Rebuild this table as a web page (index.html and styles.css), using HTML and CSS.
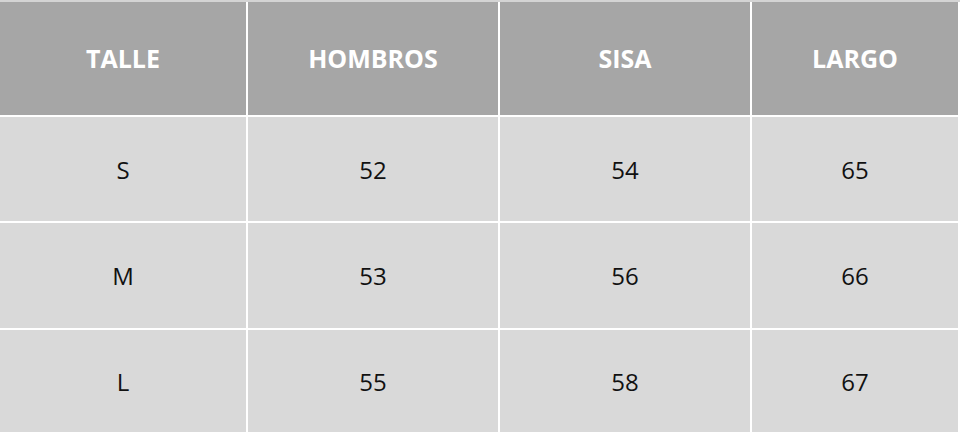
FILE: index.html
```html
<!DOCTYPE html>
<html>
<head>
<meta charset="utf-8">
<link rel="stylesheet" href="styles.css">
</head>
<body>
<div class="table">
  <div class="cell head">TALLE</div>
  <div class="cell head">HOMBROS</div>
  <div class="cell head">SISA</div>
  <div class="cell head">LARGO</div>
  <div class="cell">S</div>
  <div class="cell">52</div>
  <div class="cell">54</div>
  <div class="cell">65</div>
  <div class="cell">M</div>
  <div class="cell">53</div>
  <div class="cell">56</div>
  <div class="cell">66</div>
  <div class="cell">L</div>
  <div class="cell">55</div>
  <div class="cell">58</div>
  <div class="cell">67</div>
</div>
</body>
</html>
```
FILE: styles.css
```css
html, body {
  margin: 0;
  padding: 0;
  background: #ffffff;
}
.table {
  width: 960px;
  height: 432px;
  box-sizing: border-box;
  border-top: 2px solid #d4d4d4;
  padding-right: 2px;
  display: grid;
  grid-template-columns: 246px 250px 250px 206px;
  grid-template-rows: 113px 104px 105px 1fr;
  gap: 2px;
  background: #ffffff;
  font-family: "Open Sans", "Liberation Sans", sans-serif;
}
.cell {
  background: #d9d9d9;
  color: #111111;
  font-size: 24px;
  display: flex;
  align-items: center;
  justify-content: center;
}
.head {
  background: #a6a6a6;
  color: #ffffff;
  font-weight: 700;
  font-size: 25px;
  padding-bottom: 2px;
}
```
